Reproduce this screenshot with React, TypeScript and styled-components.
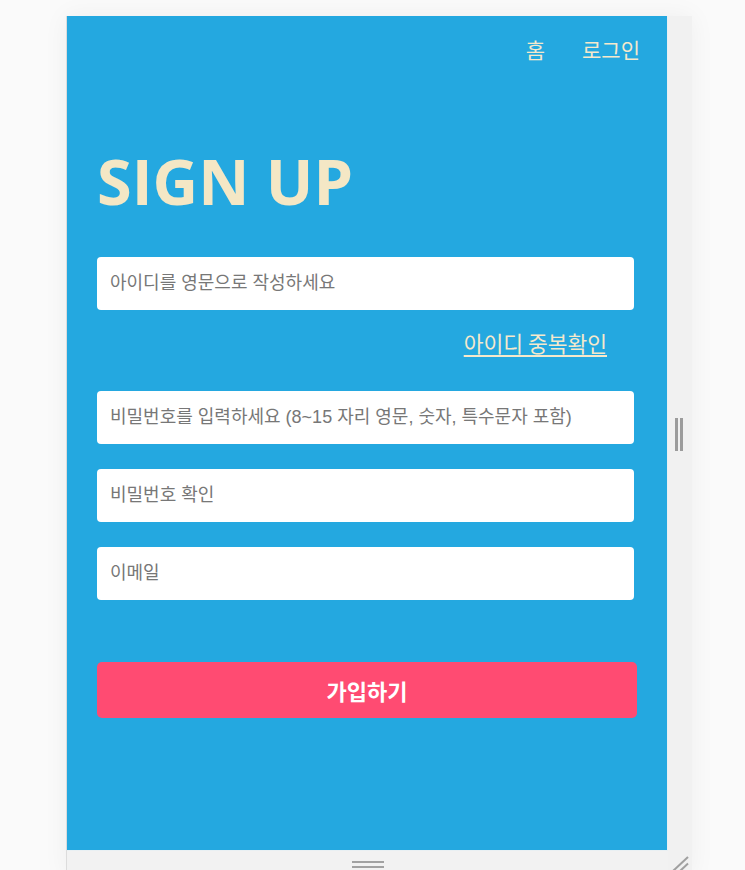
import React from "react";
import styled, { createGlobalStyle } from "styled-components";

const GlobalStyle = createGlobalStyle`
  html, body {
    margin: 0;
    padding: 0;
    background: #fafafa;
    overflow: hidden;
  }
  * { box-sizing: border-box; }
`;

const Frame = styled.div`
  display: flex;
  margin: 16px 0 0 66px;
  width: 626px;
  height: 860px;
  background: #f2f2f2;
  border-left: 1px solid #dcdcdc;
  box-shadow: 0 0 24px rgba(0, 0, 0, 0.05);
`;

const Column = styled.div`
  display: flex;
  flex-direction: column;
  width: 601px;
`;

const Panel = styled.main`
  width: 601px;
  height: 835px;
  background: #24a8e0;
  border-right: 1px solid #e9f0f3;
  border-bottom: 1px solid #e9f0f3;
  padding: 19px 0 0 30px;
  display: flex;
  flex-direction: column;
`;

const Nav = styled.nav`
  display: flex;
  justify-content: flex-end;
  gap: 37px;
  padding-right: 27px;
  font-family: "Noto Sans CJK KR", "Noto Sans", sans-serif;
  font-size: 21px;
  line-height: 29px;
  color: #f5e9cc;
`;

const NavLink = styled.a`
  color: inherit;
  text-decoration: none;
`;

const Title = styled.h1`
  margin: 85px 0 0 0;
  font-family: "Open Sans", "Noto Sans", sans-serif;
  font-weight: 700;
  font-size: 63px;
  line-height: 64px;
  color: #f4e7c5;
`;

const Field = styled.input<{ $top: number }>`
  display: block;
  width: 537px;
  height: 53px;
  margin-top: ${(p) => p.$top}px;
  border: none;
  border-radius: 4px;
  background: #ffffff;
  padding: 0 13px;
  font-family: "Liberation Sans", "Noto Sans CJK KR", sans-serif;
  font-size: 18px;
  color: #333;
  outline: none;
  &::placeholder {
    color: #777777;
  }
`;

const CheckRow = styled.div`
  display: flex;
  justify-content: flex-end;
  width: 537px;
  padding-right: 27px;
  margin-top: 18px;
`;

const CheckLink = styled.a`
  font-family: "Noto Sans CJK KR", "Noto Sans", sans-serif;
  font-size: 21.5px;
  line-height: 30px;
  color: #f5e9cc;
  text-decoration: underline;
  text-underline-offset: 3px;
  text-decoration-thickness: 1.5px;
`;

const SubmitButton = styled.button`
  margin-top: 62px;
  width: 540px;
  height: 56px;
  border: none;
  border-radius: 5px;
  background: #ff4b72;
  color: #ffffff;
  font-family: "Noto Sans CJK KR", "Noto Sans", sans-serif;
  font-weight: 700;
  font-size: 22px;
  cursor: pointer;
`;

const BottomBar = styled.div`
  height: 25px;
  display: flex;
  justify-content: center;
  padding-top: 10px;
`;

const HGrip = styled.div`
  width: 32px;
  height: 7px;
  border-top: 2px solid #a2a2a2;
  border-bottom: 2px solid #a2a2a2;
`;

const SideBar = styled.div`
  position: relative;
  width: 24px;
  display: flex;
  flex-direction: column;
  align-items: center;
  padding-top: 402px;
  background: #f1f1f1;
`;

const VGrip = styled.div`
  width: 8px;
  height: 33px;
  margin-left: -3px;
  border-left: 3px solid #9c9c9c;
  border-right: 3px solid #9c9c9c;
`;

const Corner = styled.svg`
  position: absolute;
  left: 4px;
  top: 840px;
`;

export default function App() {
  return (
    <>
      <GlobalStyle />
      <Frame>
        <Column>
          <Panel>
            <Nav>
              <NavLink href="#">홈</NavLink>
              <NavLink href="#">로그인</NavLink>
            </Nav>
            <Title>SIGN UP</Title>
            <Field $top={44} type="text" placeholder="아이디를 영문으로 작성하세요" />
            <CheckRow>
              <CheckLink href="#">아이디 중복확인</CheckLink>
            </CheckRow>
            <Field
              $top={33}
              type="password"
              placeholder="비밀번호를 입력하세요 (8~15 자리 영문, 숫자, 특수문자 포함)"
            />
            <Field $top={25} type="password" placeholder="비밀번호 확인" />
            <Field $top={25} type="email" placeholder="이메일" />
            <SubmitButton type="button">가입하기</SubmitButton>
          </Panel>
          <BottomBar>
            <HGrip />
          </BottomBar>
        </Column>
        <SideBar>
          <VGrip />
          <Corner width="18" height="16" viewBox="0 0 18 16">
            <line x1="1" y1="15" x2="16" y2="1" stroke="#a0a0a0" strokeWidth="2" />
            <line x1="8" y1="15" x2="16" y2="7.5" stroke="#a0a0a0" strokeWidth="2" />
          </Corner>
        </SideBar>
      </Frame>
    </>
  );
}
